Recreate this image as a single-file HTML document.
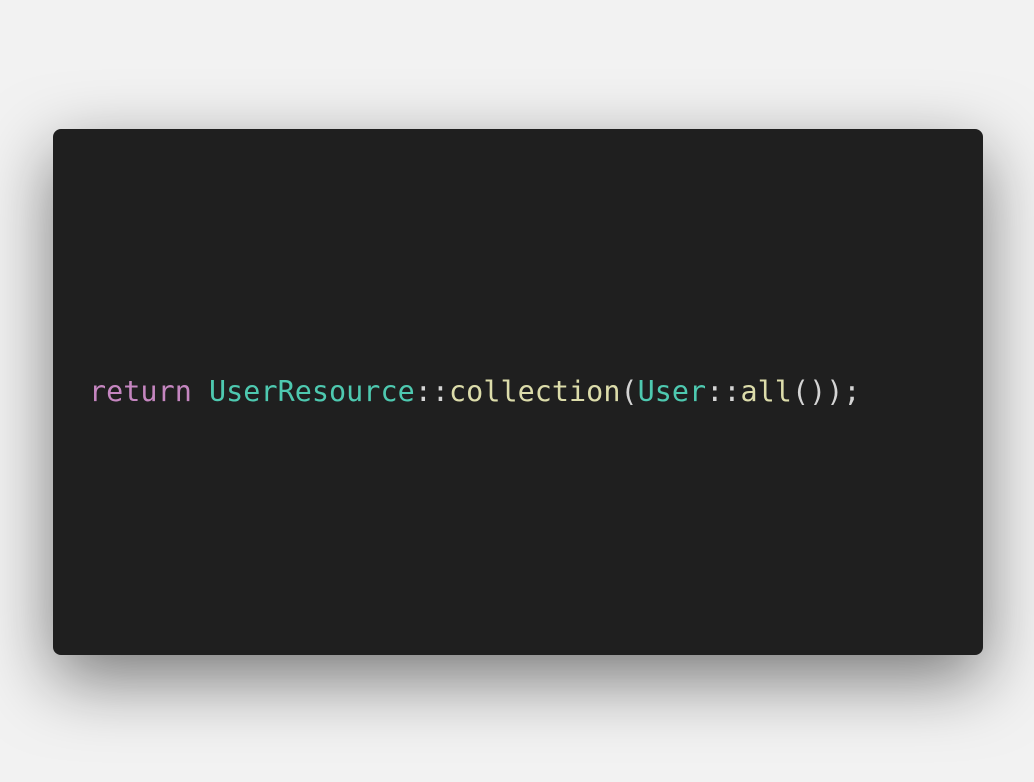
<!DOCTYPE html>
<html><head><style>
html,body{margin:0;padding:0;width:1034px;height:782px;background:#f2f2f2;overflow:hidden}
.card{position:absolute;left:53px;top:129px;width:930px;height:526px;background:#1f1f1f;border-radius:8px;box-shadow:0 24px 70px rgba(0,0,0,0.5)}
.code{position:absolute;left:89px;top:374px;font-family:"DejaVu Sans Mono","Liberation Mono",monospace;font-size:28.4px;line-height:36px;white-space:pre;color:#d4d4d4;letter-spacing:0.05px}
.k{color:#c586c0}.t{color:#4ec9b0}.f{color:#dcdcaa}.p{color:#d4d4d4}
</style></head><body>
<div class="card"></div>
<div class="code"><span class="k">return</span> <span class="t">UserResource</span><span class="p">::</span><span class="f">collection</span><span class="p">(</span><span class="t">User</span><span class="p">::</span><span class="f">all</span><span class="p">());</span></div>
</body></html>
